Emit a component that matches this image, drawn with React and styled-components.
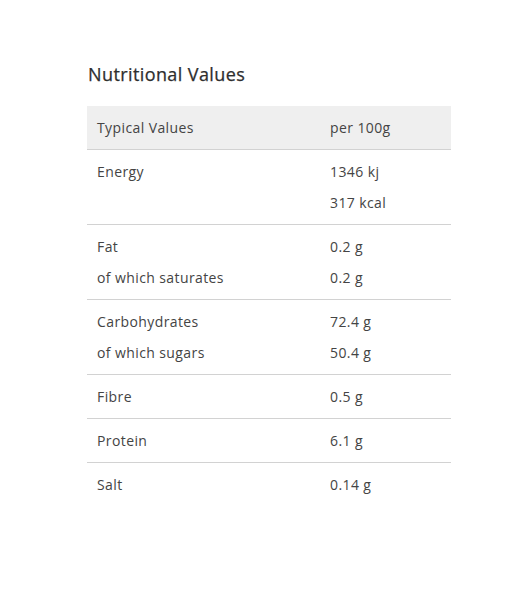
import React from "react";
import styled, { createGlobalStyle } from "styled-components";

const Global = createGlobalStyle`
  body { margin: 0; background: #fff; font-family: "Open Sans", "Liberation Sans", Arial, sans-serif; }
`;

const Page = styled.div`
  padding: 62px 72px 0 87px;
`;

const Title = styled.h2`
  margin: 0 0 20px 1px;
  font-size: 18px;
  line-height: 24px;
  font-weight: 500;
  color: #2e2e2e;
  letter-spacing: 0.4px;
  -webkit-text-stroke: 0.25px #2e2e2e;
`;

const Table = styled.div`
  width: 364px;
`;

const Row = styled.div`
  display: grid;
  grid-template-columns: 233px 131px;
  background: ${(p) => (p.$head ? "#efefef" : "transparent")};
  border-bottom: ${(p) => (p.$last ? "none" : "1px solid #d2d2d2")};
`;

const Cell = styled.div`
  display: flex;
  flex-direction: column;
  gap: 11px;
  padding: 12px 10px 11px;
  font-size: 14px;
  line-height: 20px;
  color: #444;
  letter-spacing: 0.4px;
`;

const rows = [
  { l: ["Energy"], r: ["1346 kj", "317 kcal"] },
  { l: ["Fat", "of which saturates"], r: ["0.2 g", "0.2 g"] },
  { l: ["Carbohydrates", "of which sugars"], r: ["72.4 g", "50.4 g"] },
  { l: ["Fibre"], r: ["0.5 g"] },
  { l: ["Protein"], r: ["6.1 g"] },
  { l: ["Salt"], r: ["0.14 g"] },
];

export default function App() {
  return (
    <>
      <Global />
      <Page>
        <Title>Nutritional Values</Title>
        <Table>
          <Row $head>
            <Cell>Typical Values</Cell>
            <Cell>per 100g</Cell>
          </Row>
          {rows.map((r, i) => (
            <Row key={i} $last={i === rows.length - 1}>
              <Cell>{r.l.map((t) => <span key={t}>{t}</span>)}</Cell>
              <Cell>{r.r.map((t, j) => <span key={j}>{t}</span>)}</Cell>
            </Row>
          ))}
        </Table>
      </Page>
    </>
  );
}
